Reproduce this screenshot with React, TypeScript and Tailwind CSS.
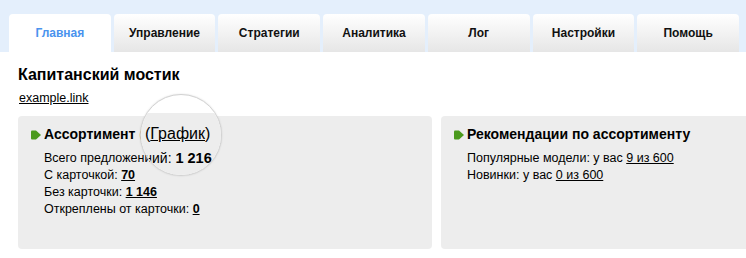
import React from "react";

const tabs = ["Главная", "Управление", "Стратегии", "Аналитика", "Лог", "Настройки", "Помощь"];

const Arrow = () => (
    <svg width="10" height="10" viewBox="0 0 10 10" className="shrink-0 mr-[3px]">
        <path d="M0 1.5 Q0 0.5 1 0.5 H5 L10 5 L5 9.5 H1 Q0 9.5 0 8.5 Z" fill="#4b9a1d" />
    </svg>
);

export default function App() {
    return (
        <div className="relative w-[746px] h-[258px] overflow-hidden bg-white text-black font-['Liberation_Sans',Arial,sans-serif]">
            <div className="flex gap-[3px] h-[52px] pt-[14px] pl-[9px] pr-[7px] bg-[#e4effc]">
                {tabs.map((t, i) => (
                    <div
                        key={t}
                        className={
                            i === 0
                                ? "flex-1 flex items-center justify-center rounded-t-[4px] bg-white text-[12px] font-bold text-[#4a93ee]"
                                : "flex-1 flex items-center justify-center rounded-t-[4px] bg-gradient-to-b from-white to-[#e6e6e6] text-[12px] font-bold text-[#111]"
                        }>
                        {t}
                    </div>
                ))}
            </div>

            <div className="pl-[18px] pt-[13px]">
                <h1 className="text-[16px] leading-[20px] font-bold">Капитанский мостик</h1>
                <a className="block w-fit mt-[5px] ml-[1px] text-[12.5px] leading-[16px] underline">example.link</a>

                <div className="flex gap-[9px] mt-[10px]">
                    <div className="w-[414px] h-[133px] shrink-0 rounded-[4px] bg-[#ededed] pl-[13px] pt-[10px]">
                        <div className="flex items-center h-[17px] text-[14px]">
                            <Arrow />
                            <span className="font-bold">Ассортимент</span>
                            <span className="ml-[4px]">
                                (<a className="underline">График</a>)
                            </span>
                        </div>
                        <div className="mt-[7px] pl-[13px] text-[12.5px] leading-[17px]">
                            <div>
                                Всего предложений: <b>1 216</b>
                            </div>
                            <div>
                                С карточкой: <a className="font-bold underline">70</a>
                            </div>
                            <div>
                                Без карточки: <a className="font-bold underline">1 146</a>
                            </div>
                            <div>
                                Откреплены от карточки: <a className="font-bold underline">0</a>
                            </div>
                        </div>
                    </div>

                    <div className="w-[414px] h-[133px] shrink-0 rounded-[4px] bg-[#ededed] pl-[13px] pt-[10px]">
                        <div className="flex items-center h-[17px] text-[14px]">
                            <Arrow />
                            <span className="font-bold">Рекомендации по ассортименту</span>
                        </div>
                        <div className="mt-[7px] pl-[13px] text-[12.5px] leading-[17px]">
                            <div>
                                Популярные модели: у вас <a className="underline">9 из 600</a>
                            </div>
                            <div>
                                Новинки: у вас <a className="underline">0 из 600</a>
                            </div>
                        </div>
                    </div>
                </div>
            </div>

            {/* magnifier lens over the chart link */}
            <div className="absolute left-[140px] top-[94px] w-[82px] h-[82px] rounded-full overflow-hidden border border-[#d2d2d2] bg-white shadow-[0_0_2px_rgba(0,0,0,0.12)]">
                <div className="absolute left-0 right-0 top-[18px] bottom-0 bg-[#ededed]" />
                <div className="absolute left-[4px] top-[30px] text-[16px] leading-[18px] whitespace-nowrap">
                    (<a className="underline">График</a>)
                </div>
                <div className="absolute right-[69px] top-[55px] text-[12.5px] leading-[17px] whitespace-nowrap">
                    предложен
                </div>
                <div className="absolute left-[11px] top-[54px] text-[14px] leading-[18px] whitespace-nowrap">
                    ий: <b className="text-[14.5px]">1 216</b>
                </div>
            </div>
        </div>
    );
}
